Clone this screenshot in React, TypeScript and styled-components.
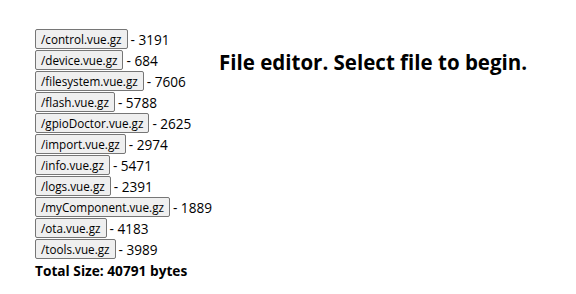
import React from "react";
import styled, { createGlobalStyle } from "styled-components";

const Global = createGlobalStyle`
  body {
    margin: 8px;
    background: #ffffff;
    color: #000000;
    font-family: "Open Sans", sans-serif;
  }
`;

const Page = styled.div`
  display: flex;
  align-items: flex-start;
  padding: 21px 0 0 27px;
`;

const FileList = styled.div`
  display: flex;
  flex-direction: column;
  gap: 1px;
`;

const Row = styled.div`
  display: flex;
  align-items: center;
  height: 20px;
  white-space: nowrap;
`;

const FileButton = styled.button`
  font-family: "Open Sans", sans-serif;
  font-size: 11.7px;
  height: 20px;
  padding: 0 5px;
  margin-right: 3px;
  background: #efefef;
  border: 1px solid #767676;
  border-radius: 2px;
  color: #000;
  line-height: 18px;
`;

const Size = styled.span`
  font-size: 13.6px;
`;

const Total = styled.div`
  font-weight: bold;
  font-size: 13.7px;
  margin-top: 1px;
  white-space: nowrap;
`;

const Heading = styled.h2`
  margin: 19px 0 0 7px;
  font-size: 20.5px;
  font-weight: bold;
  white-space: nowrap;
`;

const files: [string, number][] = [
  ["/control.vue.gz", 3191],
  ["/device.vue.gz", 684],
  ["/filesystem.vue.gz", 7606],
  ["/flash.vue.gz", 5788],
  ["/gpioDoctor.vue.gz", 2625],
  ["/import.vue.gz", 2974],
  ["/info.vue.gz", 5471],
  ["/logs.vue.gz", 2391],
  ["/myComponent.vue.gz", 1889],
  ["/ota.vue.gz", 4183],
  ["/tools.vue.gz", 3989],
];

export default function App() {
  return (
    <>
      <Global />
      <Page>
        <FileList>
          {files.map(([name, size]) => (
            <Row key={name}>
              <FileButton>{name}</FileButton>
              <Size>- {size}</Size>
            </Row>
          ))}
          <Total>Total Size: 40791 bytes</Total>
        </FileList>
        <Heading>File editor. Select file to begin.</Heading>
      </Page>
    </>
  );
}
